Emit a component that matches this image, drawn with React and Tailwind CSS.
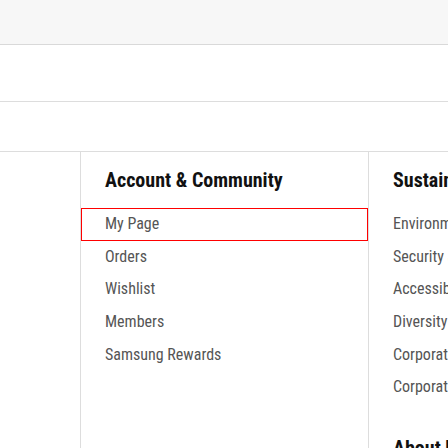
import React from "react";

const font = { fontFamily: '"Liberation Sans Narrow", "Roboto Condensed", Roboto, sans-serif' };

function Column({ title, items, extra, active }) {
  return (
    <div className="w-[288px] shrink-0 border-l border-[#dddddd] pt-[16px]">
      <h3 className="px-6 text-[20px] leading-[24px] font-bold text-[#111]">{title}</h3>
      <ul className="mt-[16px]">
        {items.map((it, i) => (
          <li
            key={it}
            className={
              "h-[32.6px] px-6 flex items-center text-[16px] leading-[20px] text-[#555555] " +
              (i === active ? "border border-[#ff0000] pl-[23px]" : "")
            }
          >
            {it}
          </li>
        ))}
      </ul>
      {extra ? (
        <h3 className="mt-[32px] px-6 text-[20px] leading-[24px] font-bold text-[#111]">{extra}</h3>
      ) : null}
    </div>
  );
}

export default function App() {
  return (
    <div className="w-[448px] h-[448px] overflow-hidden bg-white" style={font}>
      <div className="h-[45px] bg-[#f7f7f7] border-b border-[#d9d9d9]" />
      <div className="h-[57px] border-b border-[#dddddd]" />
      <div className="h-[50px] border-b border-[#dddddd]" />
      <div className="flex">
        <div className="w-[80px] shrink-0" />
        <Column
          title="Account & Community"
          items={["My Page", "Orders", "Wishlist", "Members", "Samsung Rewards"]}
          active={0}
        />
        <Column
          title="Sustainability"
          items={[
            "Environment",
            "Security and Privacy",
            "Accessibility",
            "Diversity · Equity · Inclusion",
            "Corporate Citizenship",
            "Corporate Sustainability",
          ]}
          extra="About Us"
        />
      </div>
    </div>
  );
}
